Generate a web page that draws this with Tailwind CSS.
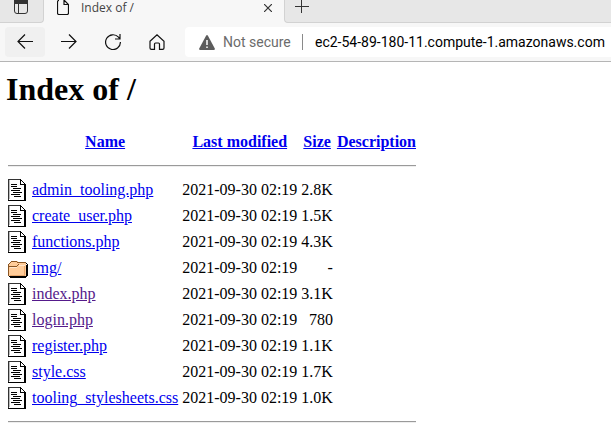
<!DOCTYPE html>
<html lang="en">
<head>
<meta charset="utf-8">
<title>Index of /</title>
<script src="https://cdn.jsdelivr.net/npm/@tailwindcss/browser@4"></script>
</head>
<body class="min-h-screen overflow-hidden bg-white text-black">
<svg class="hidden" aria-hidden="true">
  <symbol id="doc" viewBox="0 0 20 22" shape-rendering="crispEdges">
    <path fill="#fff" d="M1 1h11l5 5v15H1z"/>
    <path fill="#333" d="M0 0h12v1H0zM0 1h1v20H0z"/>
    <path fill="#bbb" d="M1 1h1v19H1z"/>
    <path fill="#000" d="M12 0h1v1h-1zM13 1h1v1h-1zM14 2h1v1h-1zM15 3h1v1h-1zM16 4h1v1h-1zM12 1h1v4h4v1h-5zM16 5h2v17H0v-1h16zM3 5h6v1H3zM3 7h6v1H3zM5 9h8v1H5zM3 11h9v1H3zM5 13h9v1H5zM3 15h9v1H3zM6 17h7v1H6z"/>
  </symbol>
  <symbol id="folder" viewBox="0 0 20 22" shape-rendering="crispEdges">
    <path fill="#ffcc99" d="M1 6l2-2h6l2 2h7v14H1z"/>
    <path fill="#e9a86c" d="M2 18h15v1H2zM16 8h1v10h-1z"/>
    <path fill="#ffe6cc" d="M2 10h7v1H2zM11 8h6v1h-6z"/>
    <path fill="#8a5522" d="M3 4h6v1H3zM2 5h1v1H2zM9 5h1v1H9zM10 5h8v1h-8zM1 6h1v1H1zM0 7h1v12H0zM1 9h8v1H1zM9 8h1v1H9zM10 7h1v1h-1z"/>
    <path fill="#000" d="M18 6h1v1h-1zM19 7h1v12h-1zM18 8h1v11h-1zM1 19h18v1H1zM2 20h16v1H2z"/>
  </symbol>
</svg>
<header class="border-b border-[#b5b5b5] bg-[#f7f7f7] font-['Open_Sans','Noto_Sans',sans-serif]">
  <div class="flex h-[23px]">
    <button aria-label="Tab actions" class="flex w-11 shrink-0 items-start rounded-br border-r border-b border-[#d2d2d2] bg-[#e7e7e7] pl-[14px]">
      <svg class="h-[14px] w-[14px]" viewBox="0 0 14 14" fill="none" stroke="#333"><path d="M.5 0v11a2.500 2.500 0 0 0 2.500 2.500h8a2.500 2.500 0 0 0 2.500-2.500V0M4.500 4v9.500"/><path d="M0 2h14" stroke-width="4"/></svg>
    </button>
    <div class="flex w-60 shrink-0 items-start pl-[13px]">
      <svg class="h-[15px] w-3" viewBox="0 0 12 15" fill="none" stroke="#111" stroke-width="1.200"><path d="M2 .5Q.5 .5 .5 2v11q0 1.500 1.500 1.500h8q1.500 0 1.500-1.500V4.500L7 0M7 0v4.500h4.500"/></svg>
      <span class="ml-3 text-xs leading-4 text-[#444]">Index of /</span>
      <button aria-label="Close tab" class="mt-1 mr-3 ml-auto"><svg class="h-2 w-2" viewBox="0 0 8 8" stroke="#333" stroke-width="1.200"><path d="M0 0l8 8M8 0L0 8"/></svg></button>
    </div>
    <div class="flex flex-1 items-start rounded-bl border-b border-l border-[#d2d2d2] bg-[#e7e7e7] pl-[10px]">
      <button aria-label="New tab"><svg class="h-[14px] w-[14px]" viewBox="0 0 14 14" stroke="#333"><path d="M0 6.500h14M6.500 0v13"/></svg></button>
    </div>
  </div>
  <div class="flex h-[38px] items-center pl-[5px]">
    <button aria-label="Back" class="flex h-[30px] w-10 items-center justify-center rounded-sm bg-[#f0f0f0]"><svg class="h-4 w-4" viewBox="0 0 16 16" fill="none" stroke="#111" stroke-width="1.200"><path d="M16 7.500H1M8 .5l-7 7 7 7"/></svg></button>
    <button aria-label="Forward" class="ml-1 flex h-[30px] w-10 items-center justify-center"><svg class="h-4 w-4" viewBox="0 0 16 16" fill="none" stroke="#111" stroke-width="1.200"><path d="M0 7.500h15M8 .5l7 7-7 7"/></svg></button>
    <button aria-label="Refresh" class="ml-1 flex h-[30px] w-10 items-center justify-center"><svg class="h-4 w-4" viewBox="0 0 16 16" fill="none" stroke="#111" stroke-width="1.200"><path d="M15.400 8A7.400 7.400 0 1 1 13.500 3.200L15 5M15 0v5h-5"/></svg></button>
    <button aria-label="Home" class="ml-1 flex h-[30px] w-10 items-center justify-center"><svg class="h-4 w-4" viewBox="0 0 16 16" fill="none" stroke="#111" stroke-width="1.200"><path d="M1 7.200L8 .8l7 6.400V14q0 1.400-1.400 1.400H10.500V10q0-1-1-1h-3q-1 0-1 1v5.400H2.400Q1 15.400 1 14z"/></svg></button>
    <div class="ml-2 flex h-[30px] min-w-0 flex-1 items-center rounded-l bg-white pl-[14px] font-[Roboto,sans-serif]">
      <svg class="h-[15px] w-4 shrink-0" viewBox="0 0 16 15"><path fill="#5c5c5c" d="M7.200.6q.8-1.200 1.600 0l7 12.900q.4 1.500-1 1.500H1.200q-1.400 0-1-1.500z"/><path stroke="#fff" stroke-width="1.500" d="M8 5v5M8 11.500V13"/></svg>
      <span class="ml-2 w-[67px] shrink-0 text-sm whitespace-nowrap text-[#6b6b6b]">Not secure</span>
      <span class="ml-3 h-4 w-px shrink-0 bg-[#8a8a8a]"></span>
      <input aria-label="Address" value="ec2-54-89-180-11.compute-1.amazonaws.com" class="ml-3 min-w-0 flex-1 text-sm outline-none">
    </div>
  </div>
</header>
<main class="px-[6px] pt-[9px] font-['Liberation_Serif',serif] text-base leading-[18px]">
  <h1 class="mb-[22px] text-[32px] leading-9 font-bold">Index of /</h1>
  <table class="border-collapse [&_a]:text-[#0000ee] [&_a]:underline [&_td]:px-0.5 [&_td]:py-0 [&_th]:px-0.5 [&_th]:py-0">
    <thead>
      <tr class="h-[26px]"><th><span class="block w-5"></span></th><th><a href="#">Name</a></th><th><a href="#">Last modified</a></th><th><a href="#">Size</a></th><th><a href="#">Description</a></th></tr>
    </thead>
    <tbody>
      <tr><td colspan="5"><hr class="my-[10px] border-t border-b border-t-[#9a9a9a] border-b-[#eee]"></td></tr>
    </tbody>
    <tbody class="[&_td:nth-child(4)]:text-right [&_tr]:h-[26px]">
      <tr><td><svg class="h-[22px] w-5" role="img" aria-label="Text file"><use href="#doc"/></svg></td><td><a href="#">admin_tooling.php</a></td><td>2021-09-30 02:19</td><td>2.8K</td><td></td></tr>
      <tr><td><svg class="h-[22px] w-5" role="img" aria-label="Text file"><use href="#doc"/></svg></td><td><a href="#">create_user.php</a></td><td>2021-09-30 02:19</td><td>1.5K</td><td></td></tr>
      <tr><td><svg class="h-[22px] w-5" role="img" aria-label="Text file"><use href="#doc"/></svg></td><td><a href="#">functions.php</a></td><td>2021-09-30 02:19</td><td>4.3K</td><td></td></tr>
      <tr><td><svg class="h-[22px] w-5" role="img" aria-label="Folder"><use href="#folder"/></svg></td><td><a href="#">img/</a></td><td>2021-09-30 02:19</td><td>-</td><td></td></tr>
      <tr><td><svg class="h-[22px] w-5" role="img" aria-label="Text file"><use href="#doc"/></svg></td><td><a href="#" class="text-[#551a8b]!">index.php</a></td><td>2021-09-30 02:19</td><td>3.1K</td><td></td></tr>
      <tr><td><svg class="h-[22px] w-5" role="img" aria-label="Text file"><use href="#doc"/></svg></td><td><a href="#" class="text-[#551a8b]!">login.php</a></td><td>2021-09-30 02:19</td><td>780</td><td></td></tr>
      <tr><td><svg class="h-[22px] w-5" role="img" aria-label="Text file"><use href="#doc"/></svg></td><td><a href="#">register.php</a></td><td>2021-09-30 02:19</td><td>1.1K</td><td></td></tr>
      <tr><td><svg class="h-[22px] w-5" role="img" aria-label="Text file"><use href="#doc"/></svg></td><td><a href="#">style.css</a></td><td>2021-09-30 02:19</td><td>1.7K</td><td></td></tr>
      <tr><td><svg class="h-[22px] w-5" role="img" aria-label="Text file"><use href="#doc"/></svg></td><td><a href="#">tooling_stylesheets.css</a></td><td>2021-09-30 02:19</td><td>1.0K</td><td></td></tr>
    </tbody>
    <tfoot>
      <tr><td colspan="5"><hr class="my-[10px] border-t border-b border-t-[#9a9a9a] border-b-[#eee]"></td></tr>
    </tfoot>
  </table>
</main>
</body>
</html>
